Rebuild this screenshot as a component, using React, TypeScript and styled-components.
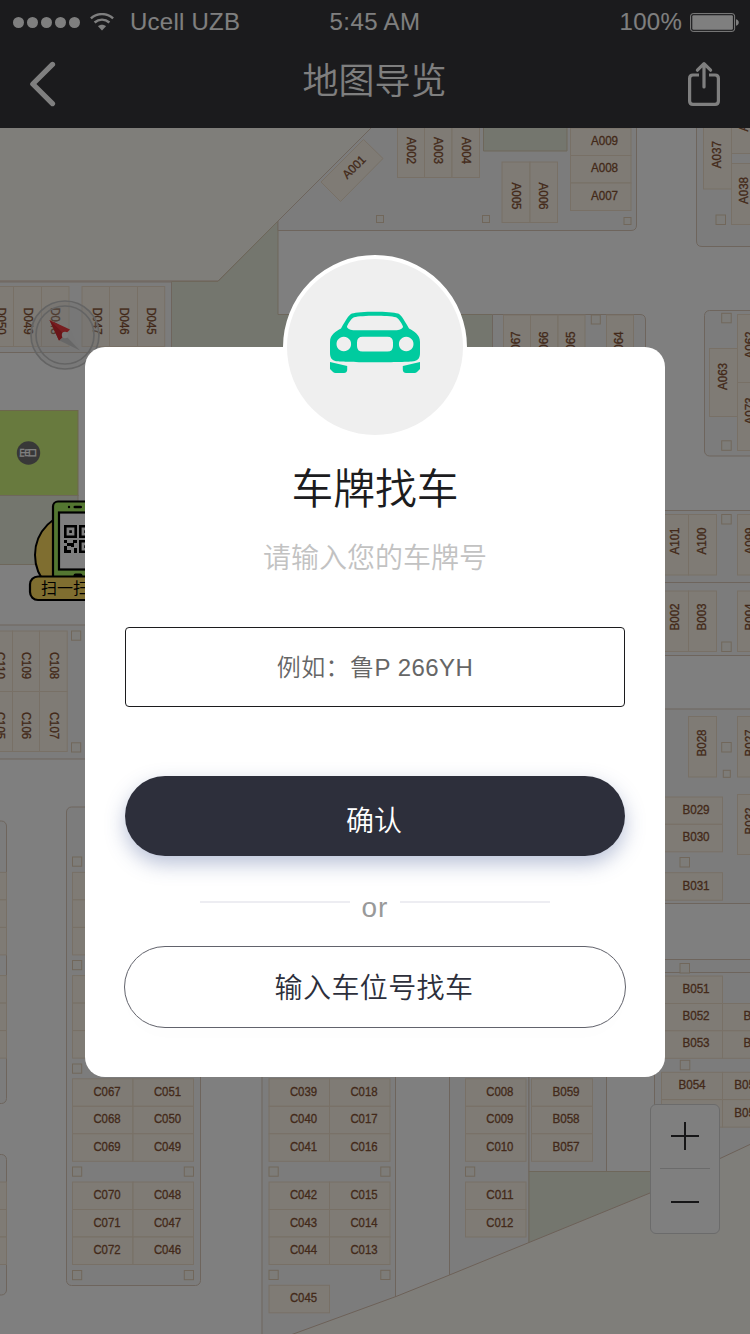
import React from 'react';
import styled, { createGlobalStyle } from 'styled-components';

const GlobalStyle = createGlobalStyle`
  * { box-sizing: border-box; }
  body { margin: 0; background: #fff; }
`;

const cjk = `'Noto Sans CJK SC', sans-serif`;
const latin = `'Liberation Sans', ${cjk}`;

const Screen = styled.div`
  position: relative;
  display: flex;
  flex-direction: column;
  width: 750px;
  height: 1334px;
  overflow: hidden;
  font-family: ${latin};
`;

/* ---------- header ---------- */

const Header = styled.header`
  height: 128px;
  flex: none;
  background: #37373a;
  color: #fff;
`;

const StatusBar = styled.div`
  display: grid;
  grid-template-columns: 1fr auto 1fr;
  align-items: center;
  height: 42px;
  padding: 0 10px 0 13px;
  font-size: 24px;
  line-height: 44px;
`;

const StatusGroup = styled.div<{ $end?: boolean }>`
  display: flex;
  align-items: center;
  justify-content: ${(p) => (p.$end ? 'flex-end' : 'flex-start')};
  gap: ${(p) => (p.$end ? '8px' : '0')};
  letter-spacing: 0.25px;
`;

const SignalDots = styled.div`
  display: flex;
  gap: 3px;
  margin-right: 10px;
`;

const Dot = styled.i`
  width: 11px;
  height: 11px;
  border-radius: 50%;
  background: #fff;
`;

const Carrier = styled.span`
  margin-left: 16px;
`;

const Clock = styled.span`
  margin-right: 3px;
  letter-spacing: 0.4px;
`;

const NavBar = styled.div`
  display: grid;
  grid-template-columns: 1fr auto 1fr;
  align-items: center;
  height: 84px;
  padding: 0 29px 0 28px;
`;

const NavTitle = styled.h1`
  margin: 0;
  padding-bottom: 12px;
  font: 350 36px/52px ${cjk};
`;

const NavButton = styled.button<{ $end?: boolean }>`
  justify-self: ${(p) => (p.$end ? 'end' : 'start')};
  display: flex;
  padding: 0;
  border: 0;
  background: none;
  color: inherit;
`;

/* ---------- map ---------- */

const MapArea = styled.main`
  position: relative;
  flex: 1;
`;

const MapCanvas = styled.svg`
  display: block;
  width: 750px;
  height: 1206px;
  font-family: 'Liberation Sans', sans-serif;
  font-size: 12px;
`;

const Compass = styled.svg`
  position: absolute;
  left: 29px;
  top: 171px;
`;

const ScanSticker = styled.svg`
  position: absolute;
  left: 28px;
  top: 368px;
`;

const ZoomControl = styled.div`
  position: absolute;
  right: 30px;
  bottom: 100px;
  display: flex;
  flex-direction: column;
  align-items: center;
  width: 70px;
  height: 130px;
  border: 1px solid #d6d6d6;
  border-radius: 6px;
  background: #fff;
`;

const ZoomButton = styled.button`
  display: flex;
  align-items: center;
  justify-content: center;
  height: 63px;
  width: 50px;
  padding: 0 0 1px;
  border: 0;
  background: none;
  & + & {
    height: 65px;
    border-top: 1px solid #d6d6d6;
  }
`;

/* ---------- dialog ---------- */

const Scrim = styled.div`
  position: absolute;
  inset: 0;
  display: flex;
  justify-content: center;
  align-items: flex-start;
  padding-top: 347px;
  background: rgba(0, 0, 0, 0.5);
`;

const Dialog = styled.section`
  display: flex;
  flex-direction: column;
  align-items: center;
  width: 580px;
  height: 730px;
  padding: 0 40px;
  border-radius: 20px;
  background: #fff;
`;

const Badge = styled.div`
  display: flex;
  flex: none;
  justify-content: center;
  width: 184px;
  height: 184px;
  margin-top: -92px;
  padding-top: 52px;
  border: 4px solid #fff;
  border-radius: 50%;
  background: #efefef;
`;

const DialogTitle = styled.h2`
  margin: 17px 0 0;
  font: 350 41.8px/60px ${cjk};
  color: #1c1c1e;
`;

const DialogHint = styled.p`
  margin: 19px 0 0;
  font: 350 28px/42px ${cjk};
  color: #c2c2c2;
`;

const PlateInput = styled.input`
  width: 500px;
  height: 80px;
  margin-top: 50px;
  padding: 2px 0 0;
  border: 1px solid #1c1c1e;
  border-radius: 4px;
  outline: none;
  text-align: center;
  font: 350 24px ${latin};
  letter-spacing: 0.45px;
  &::placeholder {
    color: #666;
    opacity: 1;
  }
`;

const PillButton = styled.button<{ $outline?: boolean }>`
  flex: none;
  width: ${(p) => (p.$outline ? '502px' : '500px')};
  height: ${(p) => (p.$outline ? '82px' : '80px')};
  margin-top: ${(p) => (p.$outline ? '18px' : '69px')};
  padding: ${(p) => (p.$outline ? '0 2px 3px 0' : '6px 2px 0 0')};
  border: ${(p) => (p.$outline ? '1px solid #62636c' : '0')};
  border-radius: 41px;
  background: ${(p) => (p.$outline ? '#fff' : '#2d2f3b')};
  color: ${(p) => (p.$outline ? '#2d2f3b' : '#fff')};
  box-shadow: ${(p) =>
    p.$outline ? '0 10px 20px rgba(0, 0, 0, 0.006)' : '0 8px 20px rgba(63, 86, 148, 0.36)'};
  font: 350 28px/40px ${cjk};
  letter-spacing: ${(p) => (p.$outline ? '0.4px' : '0')};
`;

const Divider = styled.div`
  display: flex;
  align-items: center;
  justify-content: space-between;
  width: 350px;
  height: 32px;
  margin-top: 40px;
`;

const Rule = styled.span`
  width: 150px;
  height: 2px;
  margin-bottom: 20px;
  background: #ededf2;
`;

const OrText = styled.span`
  font-size: 28px;
  line-height: 32px;
  letter-spacing: 1px;
  margin-bottom: 8px;
  color: #999;
`;

/* ---------- map data ---------- */

type Turn = 0 | 90 | -90;
type Stall = [x: number, y: number, w: number, h: number, label?: string, lx?: number, ly?: number, turn?: Turn];

const rowTops = [1078.8, 1106.3, 1133.8];
const rowTops2 = [1182, 1209.5, 1237];

const column = (x: number, lx: number, w: number, tops: number[], labels: string[]): Stall[] =>
  tops.map((y, i) => [x, y, w, 27.5, labels[i], lx, y + 13.2, 0]);

const blank = (x: number, w: number, start: number): Stall[] =>
  [0, 1, 2].map((i) => [x, start + i * 27.5, w, 27.5]);

const stalls: Stall[] = [
  [397.5, 120, 27, 57.5, 'A002', 411, 150.5, 90],
  [424.5, 120, 27.5, 57.5, 'A003', 438.5, 150.5, 90],
  [452, 120, 27.5, 57.5, 'A004', 466, 150.5, 90],
  [502, 162, 28, 60.5, 'A005', 516, 196, 90],
  [530, 162, 27.5, 60.5, 'A006', 543.5, 196, 90],
  [570.5, 128, 60.5, 27.5, 'A009', 604.5, 141, 0],
  [570.5, 155.5, 60.5, 27.5, 'A008', 604.5, 168.5, 0],
  [570.5, 183, 60.5, 27.5, 'A007', 604.5, 195.7, 0],
  [703.5, 120, 28, 69, 'A037', 717, 154.7, -90],
  [731.5, 100, 30, 53.5, 'A036', 744, 118, -90],
  [731.5, 163.5, 30, 61, 'A038', 744, 190.5, -90],
  [503.5, 315, 27, 60, 'A067', 516, 345, -90],
  [530.5, 315, 27.5, 60, 'A066', 543.5, 345, -90],
  [558, 315, 27, 60, 'A065', 570.5, 345, -90],
  [606.5, 315, 27, 60, 'A064', 619, 345, -90],
  [-14, 286.5, 27.5, 60, 'D050', 1.5, 321, 90],
  [13.5, 286.5, 28, 60, 'D049', 28, 321, 90],
  [41.5, 286.5, 27.5, 60, 'D048', 55.5, 321, 90],
  [82, 286.5, 27.5, 60, 'D047', 97, 321, 90],
  [109.5, 286.5, 28, 60, 'D046', 124.3, 321, 90],
  [137.5, 286.5, 27.2, 60, 'D045', 151.7, 321, 90],
  [709.5, 348.5, 28, 68, 'A063', 723, 376.5, -90],
  [737.5, 314.5, 28, 68, 'A062', 749.5, 345, -90],
  [737.5, 382.5, 28, 68, 'A073', 749.5, 411, -90],
  [661, 514.5, 27.5, 60.5, 'A101', 674.5, 541, -90],
  [688.5, 514.5, 28, 60.5, 'A100', 701.7, 541, -90],
  [737.5, 514.5, 28, 60.5, 'A099', 749.5, 541, -90],
  [661, 591, 27.5, 60.5, 'B002', 674.5, 617, -90],
  [688.5, 591, 28, 60.5, 'B003', 701.7, 617, -90],
  [737.5, 591, 28, 60.5, 'B004', 749.5, 617, -90],
  [688.5, 716.5, 28, 60.5, 'B028', 701.7, 743, -90],
  [737.5, 716.5, 28, 60.5, 'B027', 749.5, 743, -90],
  [737.5, 794.5, 28, 60, 'B032', 749.5, 821, -90],
  [661.5, 797, 61, 27.3, 'B029', 696, 810, 0],
  [661.5, 824.3, 61, 27.5, 'B030', 696, 837.3, 0],
  [661.5, 872.7, 61, 27.5, 'B031', 696, 886, 0],
  [661.5, 976, 61, 27.5, 'B051', 696, 988.9, 0],
  [661.5, 1003.5, 61, 27.3, 'B052', 696, 1016, 0],
  [661.5, 1030.8, 61, 27.5, 'B053', 696, 1043.3, 0],
  [722.5, 1003.5, 61, 27.3, 'B050', 757, 1016, 0],
  [722.5, 1030.8, 61, 27.5, 'B049', 757, 1043.3, 0],
  [661.5, 1072.3, 61, 27.3, 'B054', 692, 1085.3, 0],
  [722.5, 1072.3, 61, 27.3, 'B055', 747.8, 1085.3, 0],
  [661.5, 1099.6, 61, 27.5],
  [722.5, 1099.6, 61, 27.5, 'B056', 747.8, 1112.7, 0],
  [-14, 631, 26.5, 60.5, 'C110', 0, 665.5, 90],
  [12.5, 631, 27, 60.5, 'C109', 26.7, 665.5, 90],
  [39.5, 631, 27.7, 60.5, 'C108', 54, 665.5, 90],
  [-14, 691.5, 26.5, 60, 'C105', 0, 725.5, 90],
  [12.5, 691.5, 27, 60, 'C106', 26.7, 725.5, 90],
  [39.5, 691.5, 27.7, 60, 'C107', 54, 725.5, 90],
  ...[872.4, 975.6].flatMap((y) => [...blank(72.5, 60.5, y), ...blank(-54, 60.5, y)]),
  ...blank(-54, 60.5, 1182),
  ...column(72.5, 107, 60.5, rowTops, ['C067', 'C068', 'C069']),
  ...column(133, 167.5, 60.5, rowTops, ['C051', 'C050', 'C049']),
  ...column(72.5, 107, 60.5, rowTops2, ['C070', 'C071', 'C072']),
  ...column(133, 167.5, 60.5, rowTops2, ['C048', 'C047', 'C046']),
  ...column(269, 303.5, 60.5, rowTops, ['C039', 'C040', 'C041']),
  ...column(329.5, 364, 60.5, rowTops, ['C018', 'C017', 'C016']),
  ...column(269, 303.5, 60.5, rowTops2, ['C042', 'C043', 'C044']),
  ...column(329.5, 364, 60.5, rowTops2, ['C015', 'C014', 'C013']),
  ...column(269, 303.5, 60.5, [1285.3], ['C045']),
  ...column(465.5, 499.8, 60.5, rowTops, ['C008', 'C009', 'C010']),
  ...column(465.5, 499.8, 60.5, rowTops2.slice(0, 2), ['C011', 'C012']),
  ...column(531.5, 566, 61, rowTops, ['B059', 'B058', 'B057']),
];

const pillars: [x: number, y: number, size: number][] = [
  [376.5, 215.5, 7], [482.5, 215.5, 7], [624, 217.5, 7], [716, 215, 9.5],
  [591.3, 315, 9], [721.7, 313.3, 9.5], [721.7, 440.8, 9.5], [721.7, 514.5, 9.5],
  [721.7, 642, 9.5], [721.7, 742.5, 9.5], [723.3, 770.3, 7], [680, 857.5, 9.5],
  [680, 963.5, 9.5], [680.3, 1060.3, 9.5], [71.5, 631, 9.2], [71.5, 742.8, 9.2],
  [72.5, 857, 9.2], [72.5, 960.5, 9.2], [72.5, 1064, 9.2],
  [72.5, 1167, 9.2], [184.3, 1167, 9.2], [72.5, 1270.5, 9.2], [184.3, 1270.5, 9.2],
  [269, 1167, 9.2], [380.8, 1167, 9.2], [269, 1270.3, 9.2], [380.8, 1270.3, 9.2],
  [465.5, 1167, 9.2],
];

const ground = { fill: '#f8f8f8', stroke: '#dccbbb' };
const lawn = { fill: '#e8ecdc', stroke: '#dccfb6' };
const plot = { fill: '#fffcf5', stroke: '#d9c2b0' };

const ParkingMap = () => (
  <MapCanvas viewBox="0 128 750 1206">
    <path {...plot} d="M-2 120H379L218 281H-2Z" />
    <path {...lawn} d="M171.5 281.5H218L278 221V314.5H492.5V400H171.5Z" />
    <path {...ground} d="M379 120L278 221V230.5H631Q636.500 230.500 636.500 225V120Z" />
    <path {...lawn} d="M483.500 120H567V151H483.500Z" />
    <path {...ground} d="M760 246.500H702Q696.500 246.500 696.500 241V120H760Z" />
    <path {...ground} d="M492.500 314.500H640Q645.500 314.500 645.500 320V400H492.500Z" />
    <path {...ground} d="M-2 282H171.500V352.500H-2Z" />
    <rect {...ground} x="704.500" y="310.500" width="80" height="145.500" rx="5" />
    <rect {...ground} x="600" y="510.500" width="200" height="72" />
    <rect {...ground} x="600" y="582.500" width="200" height="73" />
    <rect {...ground} x="600" y="709" width="200" height="194.500" />
    <path {...ground} d="M654.500 959.500H760V1200H654.500Z" />
    <path {...ground} fill="none" d="M654.500 972.500H760" />
    <rect fill="#d0f47c" stroke="#d8cf98" x="-2" y="410.500" width="80" height="85" />
    <rect {...lawn} x="-2" y="495.500" width="80" height="69" />
    <rect {...ground} x="-20" y="625" width="140" height="134" rx="5" />
    <rect {...ground} x="-60" y="821" width="66.500" height="282.500" rx="5" />
    <rect {...ground} x="-60" y="1154.500" width="66.500" height="140.500" rx="5" />
    <rect {...ground} x="66.500" y="807" width="134" height="478.500" rx="5" />
    <rect {...ground} x="262" y="900" width="133.500" height="450" />
    <rect {...ground} x="449.500" y="900" width="79.500" height="450" />
    <rect {...ground} x="529" y="900" width="77.500" height="271.500" />
    <path {...lawn} d="M529 1171.500H700V1260H529Z" />
    <path {...plot} d="M270 1342.500L396 1296.500L449.500 1275L529 1242.500L650 1193L720 1158.500L752 1143.500V1340Z" />
    {stalls.map(([x, y, w, h], i) => (
      <rect key={i} x={x} y={y} width={w} height={h} fill="#fef7ea" stroke="#f0e0cc" />
    ))}
    <path d="M363.500 139.500L383 158.500L340.500 201.500L321 182Z" fill="#fef7ea" stroke="#f0e0cc" />
    {pillars.map(([x, y, size], i) => (
      <rect key={i} x={x} y={y} width={size} height={size} fill="#fbf8f2" stroke="#e2cfb6" />
    ))}
    <g fill="#865234" stroke="#865234" strokeWidth="0.300" textAnchor="middle">
      {stalls.map(([, , , , label, lx = 0, ly = 0, turn = 0], i) =>
        label ? (
          <text
            key={i}
            transform={`translate(${lx} ${turn ? ly : ly - 0.3}) rotate(${turn})`}
            y="4.200"
            textLength="27.200"
            lengthAdjust="spacingAndGlyphs"
          >
            {label}
          </text>
        ) : null,
      )}
      <text transform="translate(354 167) rotate(-45)" y="4.200" textLength="27.200" lengthAdjust="spacingAndGlyphs">
        A001
      </text>
    </g>
    <circle cx="28.500" cy="453" r="11.700" fill="#707070" />
    <g fill="#fff" fontFamily="Noto Sans CJK SC" fontWeight="700" fontSize="9.500" textAnchor="middle">
      <text transform="translate(24.300 452.700) rotate(90)" y="3.500">出</text>
      <text transform="translate(32.700 452.700) rotate(90)" y="3.500">口</text>
    </g>
  </MapCanvas>
);

const CompassIcon = () => (
  <Compass width="72" height="72" viewBox="29 299 72 72">
    <circle cx="65" cy="335" r="34" fill="#d8d8d8" fillOpacity="0.300" stroke="#c8c8c8" strokeWidth="1.700" />
    <circle cx="65" cy="335" r="29" fill="none" stroke="#c8c8c8" strokeWidth="1.700" />
    <path d="M70.500 330L80 350.500L59.500 340.500Z" fill="#ececec" />
    <path d="M65 335L80 350.500L59.500 340.500Z" fill="#cfcfcf" />
    <path d="M49.500 320L70 329.500L59 340.500Z" fill="#f03a3e" />
    <path d="M49.500 320L65 335L59 340.500Z" fill="#d42a30" />
    <circle cx="65" cy="335" r="3.200" fill="#f4f4f4" />
  </Compass>
);

const ScanIcon = () => (
  <ScanSticker width="100" height="108" viewBox="28 496 100 108">
    <circle cx="78" cy="555" r="43" fill="#ffdc60" stroke="#000" strokeWidth="2" />
    <rect x="53" y="501.500" width="52" height="90" rx="5" fill="#a8ee62" stroke="#000" strokeWidth="2.200" />
    <circle cx="69" cy="507" r="1.200" />
    <rect x="73.500" y="505.700" width="8.500" height="2.600" rx="1.300" />
    <rect x="59" y="512.500" width="40" height="57" fill="#fff" stroke="#000" strokeWidth="2.200" />
    <rect x="73.500" y="573.500" width="9" height="4" rx="2" />
    <g fill="none" stroke="#000" strokeWidth="2.600">
      <path d="M65.300 526.300H75.700V536.700H65.300ZM80.300 526.300H90.700V536.700H80.300ZM80.300 541.300H90.700V551.700H80.300Z" />
    </g>
    <path d="M69.300 530.300h2.600v2.600h-2.600zM84.300 530.300h2.600v2.600h-2.600zM84.300 545.300h2.600v2.600h-2.600zM64 540h3v3h-3zM67 543h4v3h-4zM73 540h4v3h-3v4h-3v-4h2zM64 546h3v4h4v3h-7zM74 548h3v5h-3z" />
    <rect x="30" y="576.500" width="80" height="23.500" rx="8" fill="#ffdc60" stroke="#000" strokeWidth="2.200" />
    <text x="41" y="594.300" fontFamily="Noto Sans CJK SC" fontSize="16">扫一扫</text>
  </ScanSticker>
);

const CarIcon = () => (
  <svg width="90" height="63" viewBox="0 0 90 63" fill="#00cb9f">
    <path
      fillRule="evenodd"
      d="M22 2.600C29 .2 61 .2 68 2.600C71 4 73 7 79 17.600C84 20.500 90 23.500 90 31V42C90 47 88 49.500 84 50.200C76 51.500 14 51.500 6 50.200C2 49.500 0 47 0 42V31C0 23.500 6 20.500 11 17.600C17 7 19 4 22 2.600ZM24 6.200C21 7.500 17 14.500 17 15.700C17 17.500 21 19.300 24.500 19.300H65.500C69 19.300 73 17.500 73 15.700C73 14.500 69 7.500 66 6.200C58 4.200 32 4.200 24 6.200ZM13.800 25.700a7.300 7.300 0 1 0 .01 0ZM76.200 25.700a7.300 7.300 0 1 0 .01 0ZM32.500 25.700Q27 25.700 27 31.500V35Q27 40.500 32.500 40.500H57.500Q63 40.500 63 35V31.500Q63 25.700 57.500 25.700Z"
    />
    <path d="M0 51L17.200 55V59Q16.800 62 14 62H5.500Q4 62 3 61L0 58Z" />
    <path d="M90 51L72.800 55V59Q73.200 62 76 62H84.500Q86 62 87 61L90 58Z" />
  </svg>
);

const App = () => (
  <>
    <GlobalStyle />
    <Screen>
      <Header>
        <StatusBar>
          <StatusGroup>
            <SignalDots>
              {[0, 1, 2, 3, 4].map((i) => (
                <Dot key={i} />
              ))}
            </SignalDots>
            <svg width="24" height="18" viewBox="0 0 24 18" fill="none" stroke="#fff" strokeWidth="2.400">
              <path d="M.900 5.300C7 -.300 17 -.300 23.100 5.300" />
              <path d="M4.600 9.500C9 5.600 15 5.600 19.400 9.500" />
              <path d="M8 13.300C10.300 11.300 13.700 11.300 16 13.300L12 17.600Z" fill="#fff" stroke="none" />
            </svg>
            <Carrier>Ucell UZB</Carrier>
          </StatusGroup>
          <Clock>5:45 AM</Clock>
          <StatusGroup $end>
            <span>100%</span>
            <svg width="50" height="19" viewBox="0 0 50 19">
              <rect x=".600" y=".600" width="44" height="17.800" rx="2.500" fill="none" stroke="#fff" strokeWidth="1" />
              <rect x="2.300" y="2.300" width="40.600" height="14.400" rx="1.300" fill="#fff" />
              <path d="M46 6.300C49.700 7 49.700 12 46 12.700Z" fill="#fff" />
            </svg>
          </StatusGroup>
        </StatusBar>
        <NavBar>
          <NavButton aria-label="back">
            <svg width="28" height="46" viewBox="0 0 28 46" fill="none" stroke="#fff" strokeWidth="5.200" strokeLinecap="round" strokeLinejoin="round">
              <path d="M24.500 3.400L4.800 23L24.500 42.600" />
            </svg>
          </NavButton>
          <NavTitle>地图导览</NavTitle>
          <NavButton $end aria-label="share">
            <svg width="34" height="46" viewBox="0 0 34 46" fill="none" stroke="#fff" strokeWidth="3.200" strokeLinecap="round" strokeLinejoin="round">
              <path d="M12 14H6Q2.600 14 2.600 17.400V40Q2.600 43.400 6 43.400H28Q31.400 43.400 31.400 40V17.400Q31.400 14 28 14H22" strokeLinecap="butt" />
              <path d="M17 26V3M10.400 9.200L17 2.600L23.600 9.200" />
            </svg>
          </NavButton>
        </NavBar>
      </Header>

      <MapArea>
        <ParkingMap />
        <CompassIcon />
        <ScanIcon />
        <ZoomControl>
          <ZoomButton aria-label="zoom in">
            <svg width="28" height="28" stroke="#2c2c2e" strokeWidth="2">
              <path d="M0 14H28M14 0V28" />
            </svg>
          </ZoomButton>
          <ZoomButton aria-label="zoom out">
            <svg width="28" height="28" stroke="#2c2c2e" strokeWidth="2">
              <path d="M0 15H28" />
            </svg>
          </ZoomButton>
        </ZoomControl>
      </MapArea>

      <Scrim>
        <Dialog>
          <Badge>
            <CarIcon />
          </Badge>
          <DialogTitle>车牌找车</DialogTitle>
          <DialogHint>请输入您的车牌号</DialogHint>
          <PlateInput placeholder="例如：鲁P 266YH" />
          <PillButton>确认</PillButton>
          <Divider>
            <Rule />
            <OrText>or</OrText>
            <Rule />
          </Divider>
          <PillButton $outline>输入车位号找车</PillButton>
        </Dialog>
      </Scrim>
    </Screen>
  </>
);

export default App;
